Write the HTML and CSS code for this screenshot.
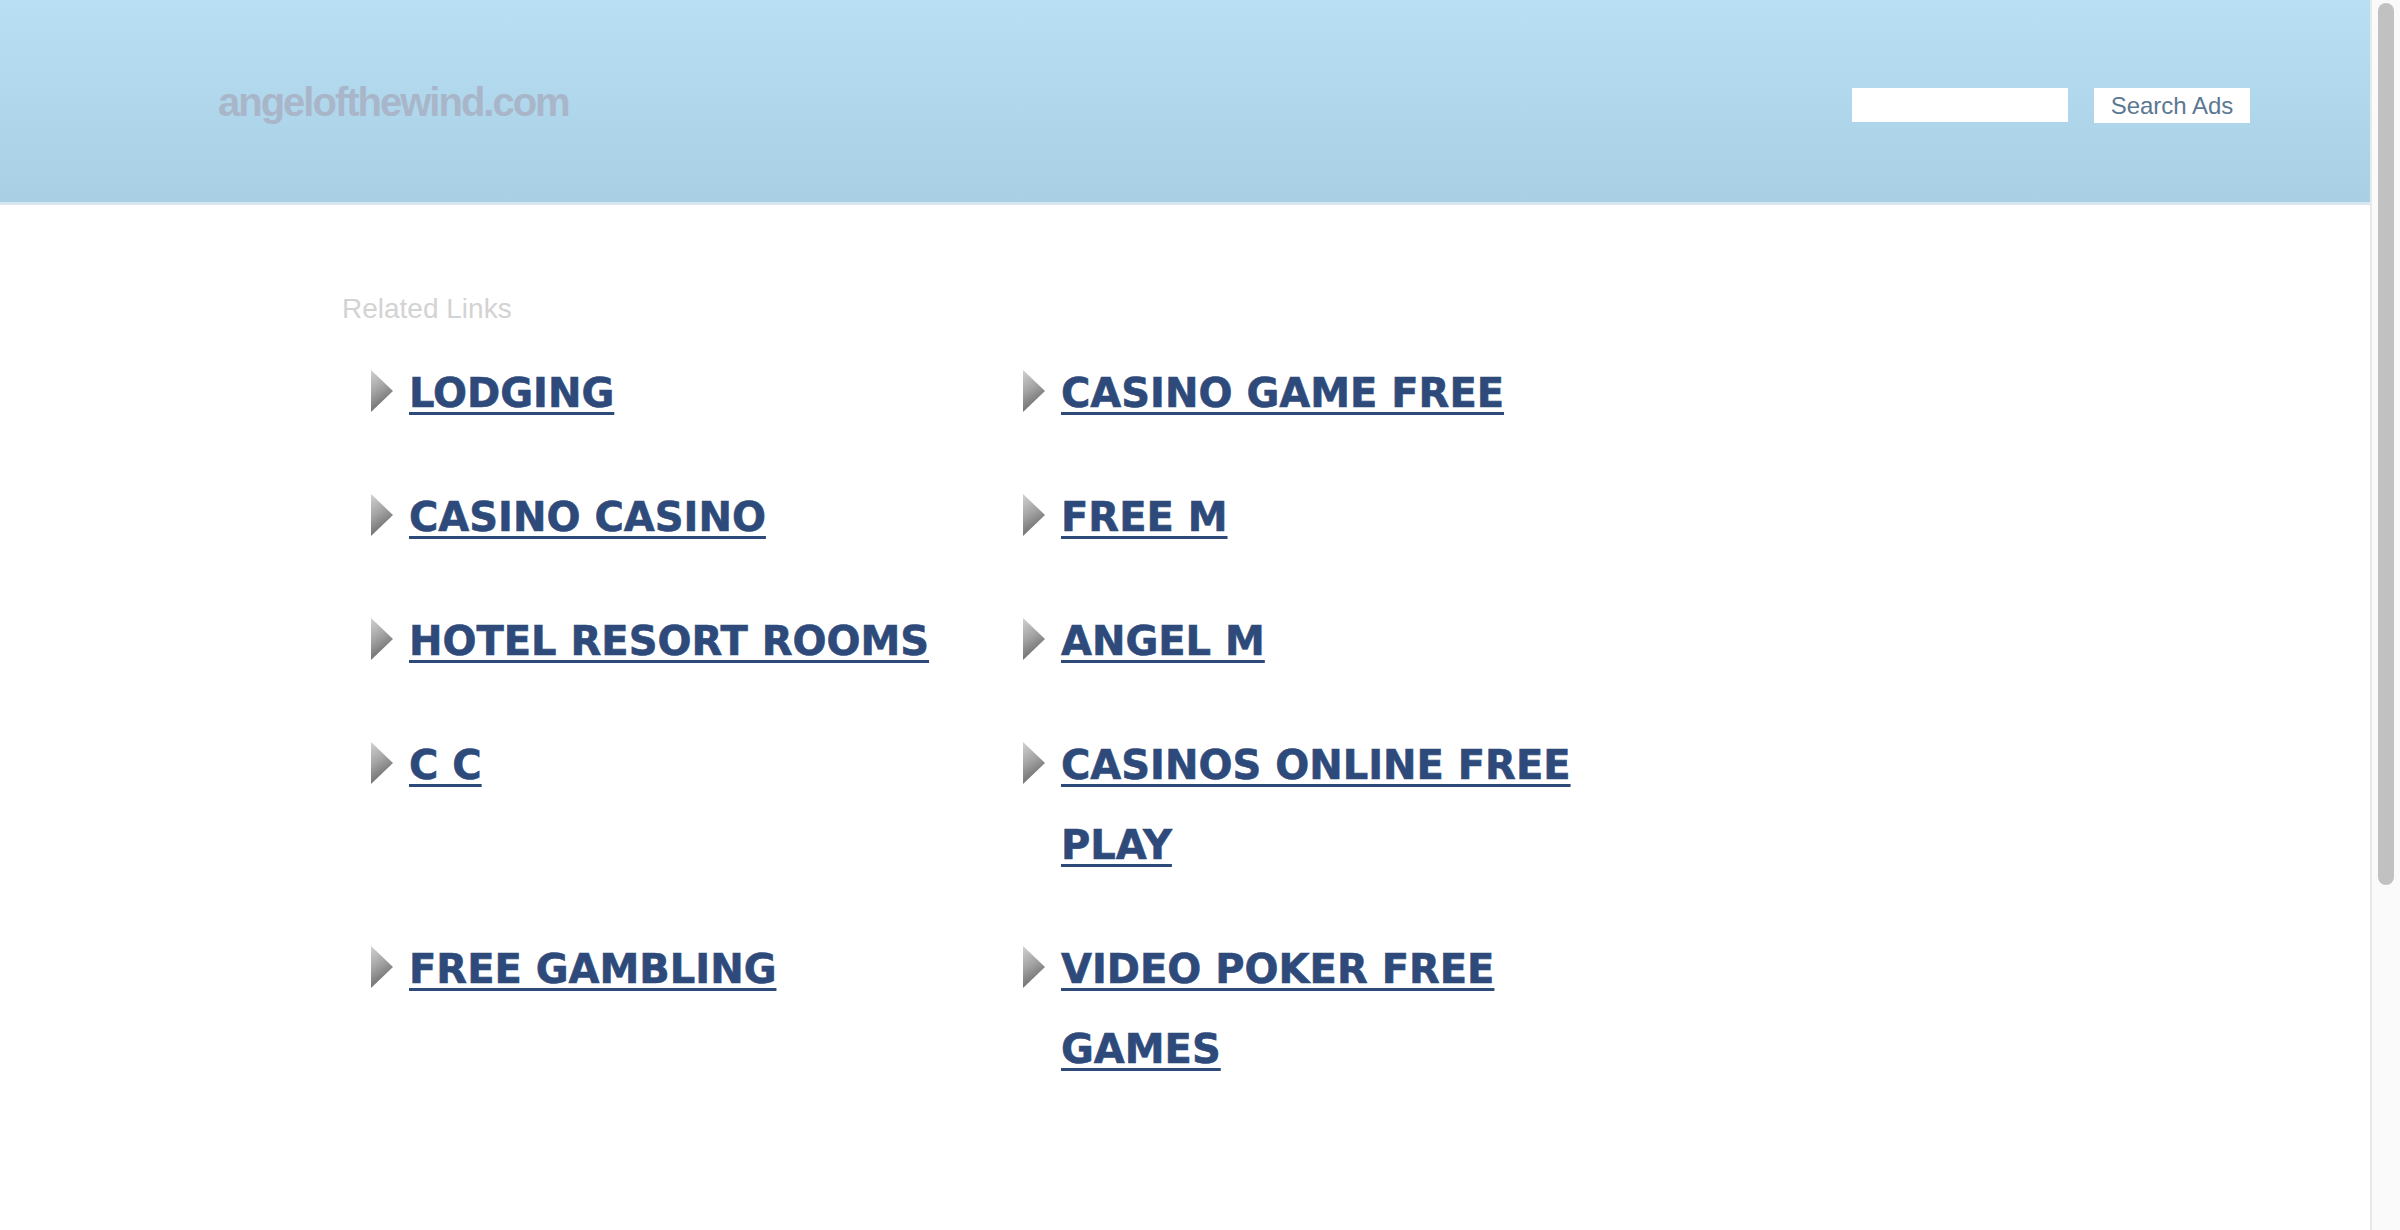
FILE: index.html
```html
<!DOCTYPE html>
<html lang="en">
<head>
<meta charset="utf-8">
<title>angelofthewind.com</title>
<link rel="stylesheet" href="styles.css">
</head>
<body>
<div class="page">
  <header class="header">
    <div class="logo">angelofthewind.com</div>
    <form class="search">
      <input class="search-input" type="text">
      <button class="search-btn" type="button">Search Ads</button>
    </form>
  </header>
  <main class="main">
    <div class="related">Related Links</div>
    <div class="links">
      <div class="item"><svg class="arrow" viewBox="0 0 24 44"><use href="#arr"/></svg><a href="#">LODGING</a></div>
      <div class="item"><svg class="arrow" viewBox="0 0 24 44"><use href="#arr"/></svg><a href="#">CASINO GAME FREE</a></div>
      <div class="item"><svg class="arrow" viewBox="0 0 24 44"><use href="#arr"/></svg><a href="#">CASINO CASINO</a></div>
      <div class="item"><svg class="arrow" viewBox="0 0 24 44"><use href="#arr"/></svg><a href="#">FREE M</a></div>
      <div class="item"><svg class="arrow" viewBox="0 0 24 44"><use href="#arr"/></svg><a href="#">HOTEL RESORT ROOMS</a></div>
      <div class="item"><svg class="arrow" viewBox="0 0 24 44"><use href="#arr"/></svg><a href="#">ANGEL M</a></div>
      <div class="item"><svg class="arrow" viewBox="0 0 24 44"><use href="#arr"/></svg><a href="#">C C</a></div>
      <div class="item"><svg class="arrow" viewBox="0 0 24 44"><use href="#arr"/></svg><a href="#">CASINOS ONLINE FREE PLAY</a></div>
      <div class="item"><svg class="arrow" viewBox="0 0 24 44"><use href="#arr"/></svg><a href="#">FREE GAMBLING</a></div>
      <div class="item"><svg class="arrow" viewBox="0 0 24 44"><use href="#arr"/></svg><a href="#">VIDEO POKER FREE GAMES</a></div>
    </div>
  </main>
</div>
<div class="scrollbar">
  <div class="scroll-thumb"></div>
</div>
<svg class="defs" width="0" height="0">
  <defs>
    <linearGradient id="ag" x1="0" y1="0" x2="0.35" y2="1">
      <stop offset="0" stop-color="#d2d2d2"/>
      <stop offset="0.5" stop-color="#a4a4a4"/>
      <stop offset="1" stop-color="#686868"/>
    </linearGradient>
    <filter id="soft" x="-20%" y="-20%" width="140%" height="140%">
      <feGaussianBlur stdDeviation="0.6"/>
    </filter>
    <polygon id="arr" points="1,1 23,22 1,43" fill="url(#ag)" filter="url(#soft)"/>
  </defs>
</svg>
</body>
</html>
```

FILE: styles.css
```css
html, body {
  margin: 0;
  padding: 0;
  background: #ffffff;
  height: 100%;
  overflow: hidden;
}

body {
  display: flex;
}

.page {
  flex: 1;
  min-width: 0;
}

.scrollbar {
  flex: none;
  width: 30px;
  height: 100%;
  box-sizing: border-box;
  background: #fafafa;
  border-left: 2px solid #e8e8e8;
  padding: 3px 6px 0 6px;
}

.scroll-thumb {
  height: 882px;
  background: #c1c1c1;
  border-radius: 8px;
}

.header {
  height: 202px;
  border-bottom: 3px solid #d9e8f0;
  background: linear-gradient(to bottom, #b8dff4 0%, #a9cfe4 100%);
  display: flex;
  justify-content: space-between;
  align-items: flex-start;
  padding: 0 120px 0 218px;
}

.logo {
  margin-top: 82px;
  font-family: "Liberation Sans", Arial, sans-serif;
  font-weight: bold;
  font-size: 40px;
  line-height: 40px;
  letter-spacing: -2px;
  color: #a9b6c9;
}

.search {
  margin: 88px 0 0 0;
  display: flex;
  align-items: flex-start;
  gap: 26px;
}

.search-input {
  width: 216px;
  height: 34px;
  box-sizing: border-box;
  border: 0;
  margin: 0;
  padding: 0 6px;
  background: #ffffff;
  outline: none;
}

.search-btn {
  width: 156px;
  height: 35px;
  box-sizing: border-box;
  border: 0;
  margin: 0;
  padding: 0;
  background: #ffffff;
  font-family: "Liberation Sans", Arial, sans-serif;
  font-size: 24px;
  color: #5b7891;
}

.main {
  padding: 88px 0 0 342px;
}

.related {
  font-family: "Liberation Sans", Arial, sans-serif;
  font-size: 28px;
  line-height: 32px;
  color: #d3d3d3;
  margin-bottom: 28px;
}

.links {
  display: grid;
  grid-template-columns: 652px 652px;
  margin-left: 28px;
}

.item {
  display: flex;
  align-items: flex-start;
  gap: 15px;
  padding-bottom: 44px;
}

.arrow {
  flex: none;
  width: 24px;
  height: 44px;
  margin-top: 16px;
}

.item a {
  max-width: 580px;
  font-family: "DejaVu Sans", Verdana, sans-serif;
  font-weight: bold;
  font-size: 40px;
  line-height: 80px;
  color: #2d4a7b;
  -webkit-text-stroke: 0.6px #2d4a7b;
  text-decoration: underline;
  text-decoration-thickness: 3px;
  text-underline-offset: 5px;
}

.defs {
  position: absolute;
  width: 0;
  height: 0;
}
```
